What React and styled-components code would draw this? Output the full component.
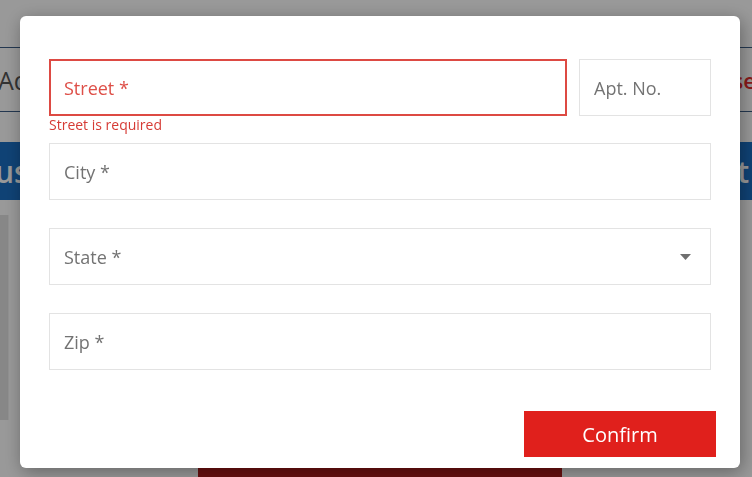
import React from "react";
import styled, { createGlobalStyle } from "styled-components";

const GlobalStyle = createGlobalStyle`
  html, body {
    margin: 0;
    padding: 0;
    background: #fff;
    font-family: "Open Sans", "Liberation Sans", sans-serif;
  }
  * {
    box-sizing: border-box;
  }
`;

const Page = styled.div`
  width: 752px;
  height: 477px;
  overflow: hidden;
  display: flex;
  flex-direction: column;
  padding-top: 47px;
  background: #fff;

  & > * {
    flex-shrink: 0;
  }
`;

const AddressRow = styled.div`
  height: 65px;
  display: flex;
  align-items: center;
  justify-content: space-between;
  border-top: 1px solid #3c5d86;
  border-bottom: 1px solid #3c5d86;
`;

const AddressText = styled.span`
  margin-left: -2px;
  font-size: 25px;
  color: #555;
`;

const CloseText = styled.span`
  margin-right: -4px;
  font-size: 22px;
  font-weight: 600;
  color: #e42c2c;
`;

const BlueBar = styled.div`
  margin-top: 30px;
  height: 58px;
  display: flex;
  align-items: center;
  justify-content: space-between;
  background: #1a6fc4;
  color: #fff;
  font-size: 30px;
  font-weight: 600;
`;

const BarLeft = styled.span`
  margin-left: -14px;
`;

const BarRight = styled.span`
  margin-right: 3px;
`;

const Body = styled.div`
  margin-top: 15px;
  height: 205px;
  display: flex;
`;

const SideBox = styled.div`
  width: 9px;
  height: 100%;
  background: #e2e2e2;
  border-right: 1px solid #f4f4f4;
`;

const DarkButton = styled.div`
  margin: 48px 0 0 198px;
  width: 364px;
  height: 40px;
  background: #b01b1b;
`;

const Overlay = styled.div`
  position: fixed;
  inset: 0;
  background: rgba(0, 0, 0, 0.4);
  padding: 16px 12px 9px 20px;
  display: flex;
`;

const Modal = styled.div`
  flex: 1;
  background: #fff;
  border-radius: 6px;
  box-shadow: 2px 4px 18px rgba(0, 0, 0, 0.35);
  padding: 43px 29px 11px 29px;
  display: flex;
  flex-direction: column;
`;

const Row = styled.div`
  display: flex;
  gap: 12px;
`;

const FieldWrap = styled.div`
  flex: ${(p) => p.$grow || "none"};
  width: ${(p) => (p.$width ? `${p.$width}px` : "auto")};
  display: flex;
  flex-direction: column;
`;

const Field = styled.div`
  height: 57px;
  display: flex;
  align-items: center;
  justify-content: space-between;
  padding: 0 ${(p) => (p.$error ? "13px" : "14px")};
  border: ${(p) => (p.$error ? "2px solid #dd4a43" : "1px solid #e3e3e3")};
  font-size: 18px;
  color: ${(p) => (p.$error ? "#de4f48" : "#737373")};
  margin-top: ${(p) => p.$mt || 0}px;
`;

const ErrorText = styled.div`
  margin: 1px 0 10px;
  line-height: 16px;
  font-size: 14px;
  color: #d63b35;
`;

const Caret = styled.svg`
  width: 11px;
  height: 6px;
  margin-right: 5px;
  fill: #6f6f6f;
`;

const Footer = styled.div`
  margin-top: 41px;
  margin-right: -5px;
  display: flex;
  justify-content: flex-end;
`;

const ConfirmButton = styled.button`
  width: 192px;
  height: 46px;
  border: none;
  border-radius: 0;
  background: #e0201c;
  color: #fff;
  font-family: "Open Sans", "Liberation Sans", sans-serif;
  font-size: 20px;
  cursor: pointer;
`;

export default function App() {
  return (
    <>
      <GlobalStyle />
      <Page>
        <AddressRow>
          <AddressText>Address</AddressText>
          <CloseText>Close</CloseText>
        </AddressRow>
        <BlueBar>
          <BarLeft>Just</BarLeft>
          <BarRight>Next</BarRight>
        </BlueBar>
        <Body>
          <SideBox />
        </Body>
        <DarkButton />
      </Page>
      <Overlay>
        <Modal>
          <Row>
            <FieldWrap $grow="1">
              <Field $error>Street *</Field>
              <ErrorText>Street is required</ErrorText>
            </FieldWrap>
            <FieldWrap $width={132}>
              <Field>Apt. No.</Field>
            </FieldWrap>
          </Row>
          <Field>City *</Field>
          <Field $mt={28}>
            State *
            <Caret viewBox="0 0 11 6">
              <path d="M0 0h11L5.5 6z" />
            </Caret>
          </Field>
          <Field $mt={28}>Zip *</Field>
          <Footer>
            <ConfirmButton>Confirm</ConfirmButton>
          </Footer>
        </Modal>
      </Overlay>
    </>
  );
}
